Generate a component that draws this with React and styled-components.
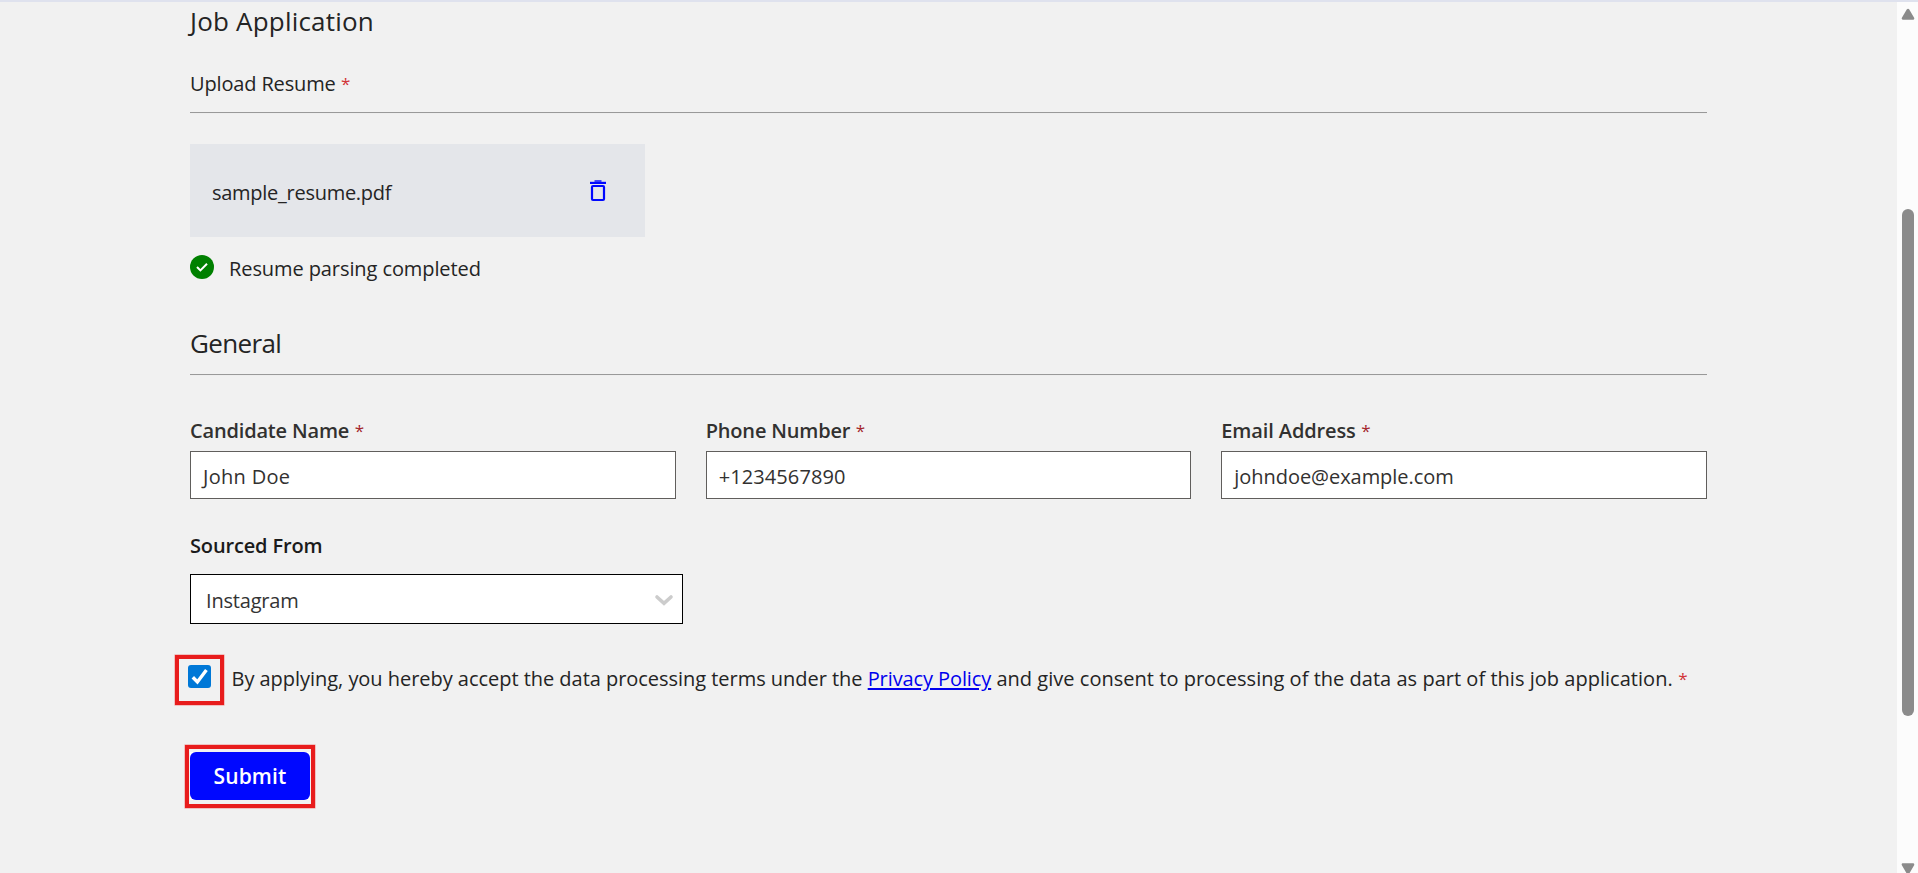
import React from "react";
import styled, { createGlobalStyle } from "styled-components";

const GlobalStyle = createGlobalStyle`
  *, *::before, *::after { box-sizing: border-box; }
  body {
    margin: 0;
    background: #f1f1f1;
    color: #242424;
    font-family: "Open Sans", "Noto Sans", sans-serif;
    font-size: 20px;
    line-height: 31px;
    overflow: hidden;
  }
  svg { display: block; flex: none; }
`;

const Page = styled.div`
  display: flex;
  height: 873px;
  border-top: 2px solid #dfe2ee;
`;

const Form = styled.form`
  flex: 1;
  padding: 1px 190px 0;
`;

const Heading = styled.h2`
  margin: ${(p) => p.$top || 0}px 0 0;
  font-size: 26px;
  font-weight: 400;
  line-height: 36px;
  letter-spacing: ${(p) => p.$track || 0}px;
`;

const SectionLabel = styled.div`
  margin-top: 29px;
`;

const Divider = styled.hr`
  height: 2px;
  margin: 13px 0 0;
  border: 0;
  border-top: 1px solid #999;
  border-bottom: 1px solid #eee;
`;

const Track = styled.span`
  letter-spacing: ${(p) => p.$by}px;
`;

const Required = styled.span`
  margin-left: 5.5px;
  font-size: 17px;
  font-weight: 400;
  line-height: 0;
  vertical-align: 1px;
  color: ${(p) => (p.$dark ? "#a4262c" : "#d13438")};
`;

const FileCard = styled.div`
  display: flex;
  align-items: center;
  justify-content: space-between;
  width: 455px;
  height: 93px;
  margin-top: 30px;
  padding: 4px 38px 0 22px;
  background: #e4e6ea;
`;

const IconButton = styled.button`
  display: flex;
  margin: -3px 0 0;
  padding: 0;
  border: 0;
  background: none;
`;

const Status = styled.div`
  display: flex;
  gap: 15px;
  margin-top: 16px;

  svg { margin-top: 2px; }
`;

const Fields = styled.div`
  display: grid;
  grid-template-columns: repeat(3, 1fr);
  gap: 30px;
  margin-top: 39px;
`;

const Field = styled.label`
  display: block;
  margin-top: ${(p) => p.$top || 0}px;
`;

const FieldLabel = styled.div`
  font-weight: 600;
  color: ${(p) => (p.$strong ? "#1b1b1b" : "#323130")};
`;

const Input = styled.div`
  display: flex;
  align-items: center;
  height: 48px;
  margin-top: 5px;
  padding: 3px 12px 0;
  border: 1px solid #605e5c;
  background: #fff;
  color: #323130;
`;

const Select = styled.div`
  display: flex;
  align-items: center;
  justify-content: space-between;
  width: 493px;
  height: 50px;
  margin-top: 13px;
  padding: 3px 8px 0 15px;
  border: 1px solid #000;
  background: #fff;
  color: #333;

  svg { margin-top: -1px; }
`;

const Consent = styled.div`
  display: flex;
  margin: 38px -10px 0 -2px;
  white-space: nowrap;
`;

const ConsentText = styled.div`
  padding-top: 1px;
  margin-bottom: -1px;
`;

const Highlighted = styled.div`
  position: relative;
  width: max-content;
`;

const CheckHolder = styled(Highlighted)`
  height: 23px;
  margin: 3px 20.5px 0 0;
`;

const Highlight = styled.span`
  position: absolute;
  top: ${(p) => p.$top}px;
  left: ${(p) => p.$left}px;
  width: ${(p) => p.$w}px;
  height: ${(p) => p.$h}px;
  border: ${(p) => p.$line || 4}px solid #e81c1c;
  box-shadow: 0 0 0 0.5px #ef8f8f;
  pointer-events: none;
`;

const PolicyLink = styled.a`
  color: #0000ee;
  letter-spacing: -0.1px;
  text-decoration: underline;
  text-decoration-thickness: 2px;
  text-underline-offset: 2px;
  text-decoration-skip-ink: auto;
`;

const SubmitRow = styled(Highlighted)`
  margin-top: 59px;
  background: #fff;
`;

const SubmitButton = styled.button`
  display: block;
  width: 120px;
  height: 48px;
  padding: 0;
  border: 0;
  border-radius: 6px;
  background: #0008ff;
  color: #fff;
  font: 600 21px/31px "Open Sans", "Noto Sans", sans-serif;
  letter-spacing: 0.1px;
`;

const Scrollbar = styled.div`
  display: flex;
  flex-direction: column;
  align-items: center;
  width: 21px;
  padding: 6px 0 0 1px;
  background: #fcfcfc;
`;

const Thumb = styled.div`
  flex: none;
  width: 12px;
  height: 507px;
  margin: 189px 0 147px;
  border-radius: 6px;
  background: #8b8b8b;
`;

const TrashIcon = () => (
  <svg width="18" height="22" viewBox="0 0 18 22" fill="none" stroke="#0008ff">
    <path d="M5.5 1h7" strokeWidth="1.4" />
    <path d="M1 2.9h16" strokeWidth="2.2" />
    <rect x="3" y="6" width="12" height="14" rx="1" strokeWidth="2.2" />
  </svg>
);

const DoneIcon = () => (
  <svg width="24" height="24" viewBox="0 0 24 24" fill="none">
    <circle cx="12" cy="12" r="12" fill="#008000" />
    <path d="M7 12l3.4 3.4L17 8.7" stroke="#fff" strokeWidth="2" />
  </svg>
);

const ChevronIcon = () => (
  <svg width="20" height="20" viewBox="0 0 20 20" fill="none">
    <path d="M3 7l7 6.4L17 7" stroke="#ccc" strokeWidth="3.6" strokeLinecap="round" />
  </svg>
);

const CheckedIcon = () => (
  <svg width="23" height="23" viewBox="0 0 23 23" fill="none">
    <rect width="23" height="23" rx="3" fill="#0078d7" />
    <path d="M4.8 12.2l4.6 4.8 9-12" stroke="#fff" strokeWidth="3.4" />
  </svg>
);

const ArrowIcon = ({ down }) => (
  <svg width="14" height="12" viewBox="0 0 14 12">
    <path
      d={down ? "M2 1.5h10L7 10.2z" : "M2 10.5h10L7 2z"}
      fill="#8b8b8b"
      stroke="#8b8b8b"
      strokeWidth="2.6"
      strokeLinejoin="round"
    />
  </svg>
);

const fields = [
  { label: "Candidate Name", labelTrack: -0.17, value: "John Doe", track: 0.3 },
  { label: "Phone Number", labelTrack: -0.17, value: "+1234567890", track: 0.1 },
  { label: "Email Address", labelTrack: -0.12, value: "johndoe@example.com", track: -0.05 },
];

export default function App() {
  return (
    <>
      <GlobalStyle />
      <Page>
        <Form>
          <Heading $track={0.2}>Job Application</Heading>
          <SectionLabel>
            <Track $by={-0.15}>Upload Resume</Track>
            <Required>*</Required>
          </SectionLabel>
          <Divider />

          <FileCard>
            <Track $by={-0.27}>sample_resume.pdf</Track>
            <IconButton type="button" aria-label="Delete file">
              <TrashIcon />
            </IconButton>
          </FileCard>
          <Status>
            <DoneIcon />
            <Track $by={-0.09}>Resume parsing completed</Track>
          </Status>

          <Heading $top={41} $track={-0.65}>General</Heading>
          <Divider />
          <Fields>
            {fields.map((f) => (
              <Field key={f.label}>
                <FieldLabel>
                  <Track $by={f.labelTrack}>{f.label}</Track>
                  <Required $dark>*</Required>
                </FieldLabel>
                <Input>
                  <Track $by={f.track}>{f.value}</Track>
                </Input>
              </Field>
            ))}
          </Fields>
          <Field as="div" $top={31}>
            <FieldLabel $strong>
              <Track $by={-0.15}>Sourced From</Track>
            </FieldLabel>
            <Select>
              <Track $by={-0.2}>Instagram</Track>
              <ChevronIcon />
            </Select>
          </Field>

          <Consent>
            <CheckHolder>
              <CheckedIcon />
              <Highlight $top={-10} $left={-13} $w={49} $h={50} />
            </CheckHolder>
            <ConsentText>
              <Track $by={-0.035}>
                By applying, you hereby accept the data processing terms under the{" "}
              </Track>
              <PolicyLink href="#">Privacy Policy</PolicyLink>
              <Track $by={0.025}>
                {" "}and give consent to processing of the data as part of this job application.
              </Track>
              <Required>*</Required>
            </ConsentText>
          </Consent>

          <SubmitRow>
            <SubmitButton type="button">Submit</SubmitButton>
            <Highlight $top={-7} $left={-5} $w={130} $h={63} $line={4.5} />
          </SubmitRow>
        </Form>
        <Scrollbar>
          <ArrowIcon />
          <Thumb />
          <ArrowIcon down />
        </Scrollbar>
      </Page>
    </>
  );
}
